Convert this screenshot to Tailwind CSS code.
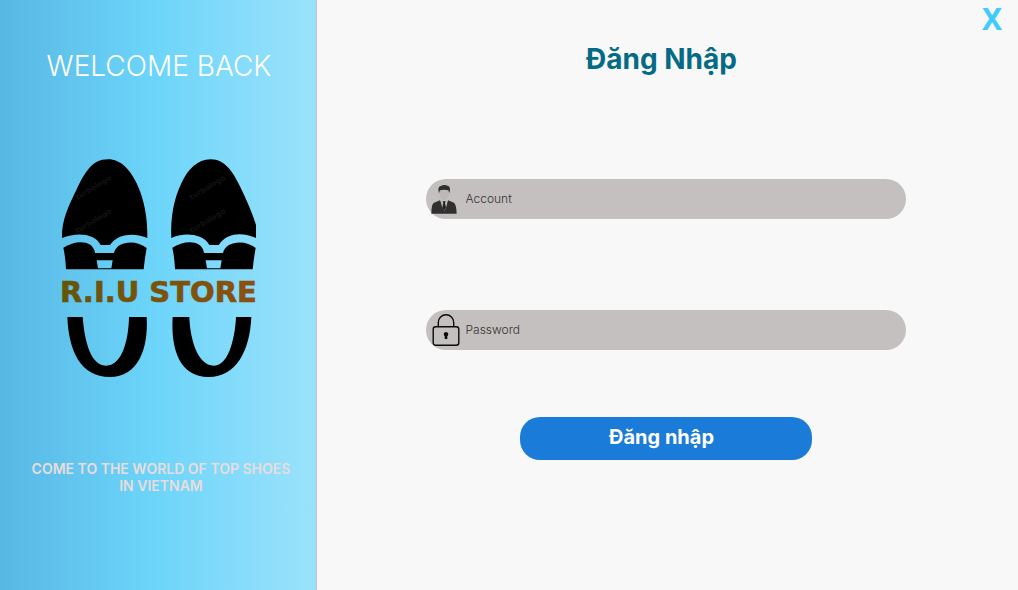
<!DOCTYPE html>
<html lang="vi">
<head>
<meta charset="utf-8">
<meta name="viewport" content="width=device-width, initial-scale=1">
<title>R.I.U Store</title>
<script src="https://cdn.jsdelivr.net/npm/@tailwindcss/browser@4"></script>
</head>
<body class="flex min-h-screen bg-[#f8f8f8] font-['Inter','Noto_Sans',sans-serif]">
<aside class="flex w-[317px] shrink-0 flex-col items-center border-r border-[#c4c4c4] bg-linear-to-r from-[#58b8e4] via-[#6dd5fa] to-[#9ae2fb] pt-12 pl-0.5 text-center">
  <h2 class="text-[28px] leading-9 font-[350] text-white">WELCOME BACK</h2>
  <svg class="mt-[75px] w-[194px] overflow-visible" viewBox="36 27 582 654" role="img" aria-label="R.I.U Store">
    <defs>
      <linearGradient id="gold" gradientUnits="userSpaceOnUse" x1="36" y1="0" x2="618" y2="0"><stop stop-color="#665507"/><stop offset="1" stop-color="#8c5010"/></linearGradient>
    </defs>
    <!-- soles -->
    <path d="M36 264C34 210 58 163 80 118C104 68 126 28 174 28C214 28 240 60 260 100C283 148 293 205 292 264C262 250 205 246 180 285H152C135 250 80 246 36 264Z"/>
    <path d="M364 264C361 205 371 148 394 100C414 58 442 28 482 28C526 28 550 68 572 113C590 150 606 186 618 225V264C580 246 530 246 506 285H478C460 250 400 246 364 264Z"/>
    <!-- arches -->
    <path id="arch" fill-rule="evenodd" d="M40 293C75 270 130 268 135 309H192C200 272 260 268 290 294C286 315 283 340 281 358H48C47 335 44 310 40 293ZM140 331L144 355H184L188 331Z"/>
    <use href="#arch" x="327"/>
    <!-- heels -->
    <path d="M52 501H98C102 550 115 647 168 647C220 647 236 560 237 501H290C296 600 262 681 180 681C90 681 56 600 52 501Z"/>
    <path d="M368 501H418C420 560 440 647 492 647C540 647 556 550 558 501H604C600 600 560 681 476 681C390 681 362 600 368 501Z"/>
    <g fill="#121212" font-family="DejaVu Sans" font-weight="700" font-size="22" aria-hidden="true">
      <text transform="translate(82 150) rotate(-31)">turbologo</text>
      <text transform="translate(82 250) rotate(-31)">turbologo</text>
      <text transform="translate(424 150) rotate(-31)">turbologo</text>
      <text transform="translate(424 250) rotate(-31)">turbologo</text>
    </g>
    <text x="30" y="455" fill="url(#gold)" stroke="url(#gold)" stroke-width="2" font-family="DejaVu Sans" font-weight="700" font-size="87">R.I.U STORE</text>
  </svg>
  <p class="mt-[83px] ml-1 w-[270px] text-sm leading-[17px] font-semibold text-[#e9dcdc]">COME TO THE WORLD OF TOP SHOES IN VIETNAM</p>
</aside>
<main class="relative min-w-0 flex-1">
  <button type="button" class="absolute top-0 right-4 font-['Noto_Sans',sans-serif] text-[30px] leading-[38px] font-bold text-[#3fccff]">X</button>
  <form class="flex flex-col items-center pt-10 pr-6 pl-5">
    <h1 class="pr-2 text-[28px] leading-[38px] font-bold text-[#046a85]">Đăng Nhập</h1>
    <label class="mt-[101px] flex h-10 w-full max-w-[480px] items-center rounded-[20px] bg-[#c4c0bf] pl-[5px]">
      <svg class="h-[30px] w-[26px] shrink-0" viewBox="0 0 78 90" aria-hidden="true">
        <path fill="#bbb8b7" d="M25 18Q39 11 54 18V30Q50 45 40 50Q28 45 25 30Z"/>
        <path fill="#303030" d="M24 28Q18 8 29 6Q40 0 50 5Q61 8 55 28L52 19Q40 15 27 19Z"/>
        <path fill="#303030" d="M1 89Q1 60 9 56L27 49L39 72L51 49L69 56Q76 62 77 89Z"/>
        <path fill="#bbb8b7" d="M28 48L39 54L51 48L46 68L40 82L33 68Z"/>
        <path fill="#222" d="M35 52H44L42 58L45 70L39 82L34 70L37 58Z"/>
      </svg>
      <input type="text" name="account" aria-label="Account" placeholder="Account" class="ml-[9px] min-w-0 flex-1 bg-transparent text-xs font-light text-[#333] outline-none placeholder:text-[#333]">
    </label>
    <label class="mt-[91px] flex h-10 w-full max-w-[480px] items-center rounded-[20px] bg-[#c4c0bf] pl-[6px]">
      <svg class="h-8 w-7 shrink-0" viewBox="0 0 28 32" fill="none" stroke="#0b0b0b" stroke-width="1.4" aria-hidden="true">
        <rect x="1.2" y="12.7" width="25.6" height="18.5" rx="2.5"/>
        <path d="M6.3 12.5V8.5a7.7 7.7 0 0 1 15.4 0v4"/>
        <path fill="#0b0b0b" stroke="none" d="M14 18a2.3 2.3 0 0 1 1.3 4.2v2.8h-2.6v-2.8A2.3 2.3 0 0 1 14 18Z"/>
      </svg>
      <input type="password" name="password" aria-label="Password" placeholder="Password" class="ml-[6px] min-w-0 flex-1 bg-transparent text-xs font-light text-[#333] outline-none placeholder:text-[#333]">
    </label>
    <button type="submit" class="mt-[67px] h-[43px] w-full max-w-[292px] rounded-[20px] bg-[#1a7bd9] pr-2 pb-1 text-xl font-bold text-white">Đăng nhập</button>
  </form>
</main>
</body>
</html>
